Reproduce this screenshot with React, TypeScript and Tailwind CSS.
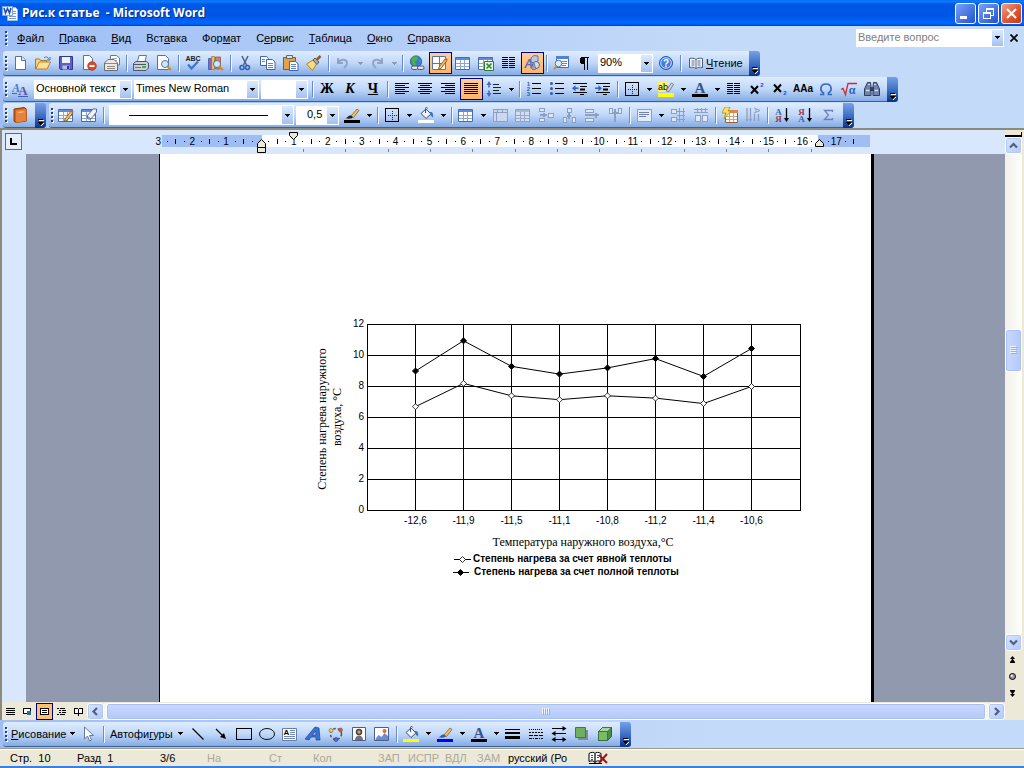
import React from 'react';

type Kids = { children?: React.ReactNode };

function Ic({ children, crisp }: Kids & { crisp?: boolean }) {
  return (
    <svg viewBox="0 0 16 16" aria-hidden="true" className="size-4 shrink-0" shapeRendering={crisp ? 'crispEdges' : undefined}>
      {children}
    </svg>
  );
}

function Tri({ faded }: { faded?: boolean }) {
  return (
    <svg viewBox="0 0 5 3" aria-hidden="true" className="h-[3px] w-[5px] shrink-0" shapeRendering="crispEdges">
      <path d="M0 0h5v1H4v1H3v1H2V2H1V1H0z" fill={faded ? '#8c98ae' : '#000'} />
    </svg>
  );
}

function Btn({ label, on, children }: Kids & { label: string; on?: boolean }) {
  return (
    <button
      type="button"
      aria-label={label}
      aria-pressed={on}
      className={
        on
          ? 'flex h-[22px] w-[23px] shrink-0 items-center justify-center border border-[#000080] bg-gradient-to-b from-[#ffcf90] to-[#ffb566] pr-px'
          : 'flex h-[22px] w-[23px] shrink-0 items-center justify-center pr-px'
      }
    >
      {children}
    </button>
  );
}

function Drop({ label, faded }: { label: string; faded?: boolean }) {
  return (
    <button type="button" aria-label={label} className="flex h-[22px] w-[11px] shrink-0 items-center justify-center">
      <Tri faded={faded} />
    </button>
  );
}

function Sep() {
  return (
    <div className="flex w-1.5 shrink-0 justify-center">
      <div className="h-4 w-px bg-[#6a8ccb]" />
      <div className="h-4 w-px translate-y-px bg-[#f1f9ff]" />
    </div>
  );
}

function Grip() {
  return (
    <svg viewBox="0 0 6 16" aria-hidden="true" className="h-4 w-1.5 shrink-0" shapeRendering="crispEdges">
      {[1, 5, 9, 13].map((y) => (
        <g key={y}>
          <rect x="3" y={y + 1} width="2" height="2" fill="#fff" />
          <rect x="2" y={y} width="2" height="2" fill="#27417a" />
        </g>
      ))}
    </svg>
  );
}

function Bar({ label, children }: Kids & { label: string }) {
  return (
    <div role="toolbar" aria-label={label} className="flex h-[25px] items-stretch">
      <div className="flex items-center rounded-l-[3px] border-b border-[#3b619c] bg-gradient-to-b from-[#dfecfe] via-[#c0d8f9] to-[#84abe3] pr-[3px]">
        <Grip />
        {children}
      </div>
      <button
        type="button"
        aria-label={label + ': параметры'}
        className="flex w-[11px] items-end justify-center rounded-r-[3px] bg-gradient-to-b from-[#77a1e6] via-[#3f70c4] to-[#063290] pb-0.5"
      >
        <svg viewBox="0 0 7 7" aria-hidden="true" className="size-[7px]" shapeRendering="crispEdges">
          <path d="M1 0h5v1H1zM1 3h5v1H5v1H4v1H3V5H2V4H1z" fill="#000" />
          <path d="M2 1h5v1H2zM6 4h1v1H6zM5 5h1v1H5zM4 6h1v1H4z" fill="#fff" />
        </svg>
      </button>
    </div>
  );
}

function Combo({ label, value, className }: { label: string; value: string; className: string }) {
  return (
    <div className={'relative mr-0.5 flex h-[19px] shrink-0 bg-white ' + className}>
      <select aria-label={label} defaultValue={value} className="w-full appearance-none bg-transparent pr-3 pb-0.5 pl-0.5 outline-none">
        <option value={value}>{value}</option>
      </select>
      <ComboArrow />
    </div>
  );
}

function ComboArrow() {
  return (
    <span className="pointer-events-none absolute inset-y-px right-px flex w-[11px] items-center justify-center bg-gradient-to-b from-[#dcebfe] to-[#a3c2f0]">
      <Tri />
    </span>
  );
}

/* ---------- shared glyph parts ---------- */

const Sheet = () => <path d="M3.500 1.500h6.500l3.500 3.500v9.500h-10z" fill="#fff" stroke="#5a6f9e" />;
const Lens = () => (
  <>
    <circle cx="9" cy="9" r="3.500" fill="#cfe8f8" stroke="#56749c" />
    <path d="M11.5 11.5l3.500 3.500" stroke="#d58a2c" strokeWidth="2.200" />
  </>
);
const Pencil = () => (
  <>
    <path d="M7 12l6-8 2 1.500-6 8-2.600 1z" fill="#f2c45e" stroke="#6e4a18" strokeWidth=".8" />
    <path d="M12.400 4.600l1.300-1.800 2 1.500-1.300 1.800z" fill="#d6614e" />
  </>
);
const Grid = ({ faded }: { faded?: boolean }) => (
  <>
    <path d="M.5 2.500h14v12H.5z" fill={faded ? '#d3dff2' : '#fff'} stroke={faded ? '#8fa0c2' : '#4a6aa5'} />
    <path d="M1 3h13v2H1z" fill={faded ? '#a9b8d6' : '#5f8bd8'} />
    <path d="M1 8.500h13M1 11.500h13M5.500 5v9M9.500 5v9" stroke={faded ? '#97a8c9' : '#8aa7d8'} />
  </>
);
const Borders = () => (
  <>
    <path d="M2 2h13v13H2z" fill="none" stroke="#000" strokeWidth="1" transform="translate(-.5 -.5)" />
    <path d="M4 8h9M8 4v9" stroke="#222" strokeDasharray="1 1" />
  </>
);
const Bucket = ({ color }: { color: string }) => (
  <>
    <path d="M3 6.500L8 2l5 5-5 4.500z" fill="#eef3fa" stroke="#41506e" />
    <path d="M7.500 6V1.500c0-1.300 2-1.300 2 0" fill="none" stroke="#41506e" />
    <path d="M12 5c3 0 3.500 2 3 5.500-1.500-1-2.500-2-3-3.500z" fill="#3b74c4" />
    <path d="M0 13h16v3H0z" fill={color} />
  </>
);
const Brush = ({ color, tone }: { color: string; tone: string }) => (
  <>
    <path d="M7 9l6-7 2 1.500-5.500 7z" fill="#f2c45e" stroke="#7a4d1a" strokeWidth=".7" />
    <path d="M1 11c3 0 3-3 6-2.500l2 2C7 12 4 12 1 11z" fill={tone} />
    <path d="M0 13h16v3H0z" fill={color} />
  </>
);
const LetterA = ({ color }: { color: string }) => (
  <>
    <text x="8" y="12" textAnchor="middle" fontFamily="Liberation Serif, serif" fontWeight="bold" fontSize="15" fill="#35548e">A</text>
    <path d="M0 13h16v3H0z" fill={color} />
  </>
);
const Columns = () => (
  <>
    {[2, 4, 6, 8, 10, 12].map((y) => (
      <path key={y} d={`M1 ${y}h6v1H1zM8 ${y}h6v1H8z`} fill="#000" />
    ))}
  </>
);

function Lines({ kind }: { kind: 'left' | 'center' | 'right' | 'full' }) {
  return (
    <Ic crisp>
      {[2, 4, 6, 8, 10, 12].map((y, i) => {
        const w = kind === 'full' || i % 2 === 0 ? 14 : 10;
        const x = kind === 'right' ? 15 - w : kind === 'center' ? 8 - w / 2 : 1;
        return <rect key={y} x={x} y={y} width={w} height="1" fill="#000" />;
      })}
    </Ic>
  );
}

/* ---------- bars ---------- */

function TitleBar() {
  return (
    <header className="flex h-[26px] shrink-0 items-center bg-[linear-gradient(180deg,#0a6ff0_0%,#0a7bff_6%,#0058e6_16%,#0055e5_60%,#0066ff_85%,#0062f5_93%,#003dc0_100%)] pr-0.5 pl-0.5">
      <svg viewBox="0 0 16 16" aria-hidden="true" className="size-4">
        <path d="M5.500 2.500h8l2 2v11h-10z" fill="#fff" stroke="#9db7dd" />
        <path d="M10 6.500h4M10 8.500h4M7 11.500h7M7 13.500h7" stroke="#7c98cc" />
        <path d="M.5 1.500h10v9H.5z" fill="#e9f1fc" stroke="#7fa4e0" />
        <path d="M2 3l1.500 5 2-4.500L7.500 8 9 3" fill="none" stroke="#2350a6" strokeWidth="1.500" />
      </svg>
      <h1 className="ml-1 flex-1 font-['Open_Sans',sans-serif] text-xs font-bold whitespace-pre text-white [text-shadow:1px_1px_1px_#0a2a80]">Рис.к статье  - Microsoft Word</h1>
      <div className="flex gap-0.5">
        <button type="button" aria-label="Свернуть" className="size-[21px] rounded-[3px] border border-white bg-gradient-to-br from-[#7ba1f5] to-[#1f4fd6]">
          <svg viewBox="0 0 19 19" aria-hidden="true"><path d="M4 12h7v3H4z" fill="#fff" /></svg>
        </button>
        <button type="button" aria-label="Восстановить" className="size-[21px] rounded-[3px] border border-white bg-gradient-to-br from-[#7ba1f5] to-[#1f4fd6]">
          <svg viewBox="0 0 19 19" aria-hidden="true" shapeRendering="crispEdges">
            <path d="M7 4h8v2H7zM7 6h1v2H7zM14 6h1v6h-1zM12 11h2v1h-2zM4 8h8v2H4zM4 10h1v5H4zM11 10h1v5h-1zM5 14h6v1H5z" fill="#fff" />
          </svg>
        </button>
        <button type="button" aria-label="Закрыть" className="size-[21px] rounded-[3px] border border-white bg-gradient-to-br from-[#f0a088] via-[#e25a35] to-[#c03a14]">
          <svg viewBox="0 0 19 19" aria-hidden="true"><path d="M5 5l9 9M14 5l-9 9" stroke="#fff" strokeWidth="2.200" /></svg>
        </button>
      </div>
    </header>
  );
}

const menus: [string, string, string][] = [
  ['', 'Ф', 'айл'],
  ['', 'П', 'равка'],
  ['', 'В', 'ид'],
  ['Вст', 'а', 'вка'],
  ['Фор', 'м', 'ат'],
  ['С', 'е', 'рвис'],
  ['', 'Т', 'аблица'],
  ['', 'О', 'кно'],
  ['', 'С', 'правка'],
];

function MenuBar() {
  return (
    <nav className="flex h-[25px] items-center pr-1 pb-0.5 pl-[3px]">
      <Grip />
      <div className="flex flex-1 gap-px pl-px">
        {menus.map(([a, b, c]) => (
          <button key={a + b + c} type="button" className="px-[7px]">
            {a}
            <u className="underline-offset-1">{b}</u>
            {c}
          </button>
        ))}
      </div>
      <div className="relative mr-1 flex h-[18px] w-[148px] bg-white">
        <input aria-label="Введите вопрос" placeholder="Введите вопрос" className="w-full bg-transparent pr-3 pb-0.5 pl-0.5 outline-none placeholder:text-[#808080]" />
        <ComboArrow />
      </div>
      <button type="button" aria-label="Закрыть документ" className="flex size-3 items-center justify-center">
        <svg viewBox="0 0 8 8" aria-hidden="true" className="size-2"><path d="M.5 .5l7 7M7.500 .5l-7 7" stroke="#000" strokeWidth="1.700" /></svg>
      </button>
    </nav>
  );
}

function StandardBar() {
  return (
    <Bar label="Стандартная">
      <Btn label="Создать"><Ic><Sheet /><path d="M9.500 1.500v4h4" fill="#d9e4f5" stroke="#5a6f9e" /></Ic></Btn>
      <Btn label="Открыть"><Ic><path d="M.5 14V4h4l1 1.500h6V7" fill="#f7d67c" stroke="#a87820" /><path d="M1 14l3-7h11.500L12 14z" fill="#fbe09a" stroke="#b8842a" /><path d="M9 3c2-2 4-1 4.500 1M15 2v3h-3" fill="none" stroke="#3c6cb5" /></Ic></Btn>
      <Btn label="Сохранить"><Ic><path d="M1.500 1.500h13v13h-12l-1-1z" fill="#5c5fc7" stroke="#34368c" /><path d="M4 2h8v6H4z" fill="#eef2fb" /><path d="M4.500 10.500h7v4h-7z" fill="#b7bce2" /><path d="M9 11h2v3H9z" fill="#34368c" /></Ic></Btn>
      <Btn label="Разрешения"><Ic><path d="M2.500 .5h6l3 3v11h-9z" fill="#fff" stroke="#5a6f9e" /><circle cx="11" cy="11" r="4.300" fill="#dd4a24" stroke="#b12d10" strokeWidth=".7" /><path d="M8.500 10h5v2h-5z" fill="#fff" /></Ic></Btn>
      <Btn label="Сообщение"><Ic><path d="M6.500 .5h6l3 2.500v7h-9z" fill="#fff" stroke="#6c7686" /><path d="M8 3.500h5M8 5.500h5" stroke="#b0b6c4" /><path d="M.5 8L4 4.500h6L13.500 8v7.500H.5z" fill="#eceadf" stroke="#6c6c70" /><path d="M1 8.500h12M3 11.500h8M3 13.500h8" fill="none" stroke="#8a8a8c" /></Ic></Btn>
      <Sep />
      <Btn label="Печать"><Ic><path d="M4.500 6.500l1.500-6h7.500l-1.500 6z" fill="#fff" stroke="#65738f" /><path d="M.5 8.500L3 6.500h10.500l2 1.500v5l-2.500 2.500H.5z" fill="#c9cedb" stroke="#4c566d" /><path d="M1 9.500h12" stroke="#4c566d" /><path d="M9 11h4v2H9z" fill="#2fc020" /><path d="M2 12.500h6" stroke="#6d768a" /></Ic></Btn>
      <Btn label="Предварительный просмотр"><Ic><path d="M1.500 .5h8l3 3v11h-11z" fill="#fff" stroke="#5a6f9e" /><Lens /></Ic></Btn>
      <Sep />
      <Btn label="Правописание"><Ic><text x="8" y="6" textAnchor="middle" fontFamily="Liberation Sans, sans-serif" fontWeight="bold" fontSize="7" fill="#222">ABC</text><path d="M3 9.500l3.500 4L13 6.500" fill="none" stroke="#3c77d2" strokeWidth="2.300" /></Ic></Btn>
      <Btn label="Справочные материалы"><Ic><path d="M.5 3.500h3v11h-3z" fill="#7a6cc0" stroke="#4d4390" strokeWidth=".7" /><path d="M3.500 1.500h3v13h-3z" fill="#e2c069" stroke="#93732a" strokeWidth=".7" /><path d="M7.500 2h5v12h-5z" fill="#d4826a" stroke="#8c4a35" strokeWidth=".7" /><Lens /></Ic></Btn>
      <Sep />
      <Btn label="Вырезать"><Ic><path d="M5 1l4.500 9M11 1L6.500 10" stroke="#4c5f85" strokeWidth="1.500" /><circle cx="5" cy="12.500" r="2" fill="none" stroke="#2a5db8" strokeWidth="1.500" /><circle cx="10.500" cy="12.500" r="2" fill="none" stroke="#2a5db8" strokeWidth="1.500" /></Ic></Btn>
      <Btn label="Копировать"><Ic><path d="M.5 1.500h6l2 2v7h-8z" fill="#fff" stroke="#3d63ae" /><path d="M6.500 4.500h6l2.500 2.500v7.500H6.500z" fill="#fff" stroke="#3d63ae" /><path d="M2 4.500h3M2 6.500h3M8 8.500h5M8 10.500h5M8 12.500h5" stroke="#5d83cc" /></Ic></Btn>
      <Btn label="Вставить"><Ic><path d="M.5 2.500h12v12H.5z" fill="#e0a24a" stroke="#8c5a18" /><path d="M3.500 .5h6v3h-6z" fill="#e0e0e0" stroke="#666" /><path d="M6.500 6.500h6l2.500 2v7H6.500z" fill="#fff" stroke="#3d63ae" /><path d="M8 9.500h5M8 11.500h5M8 13.500h5" stroke="#5d83cc" /></Ic></Btn>
      <Btn label="Формат по образцу"><Ic><path d="M.5 9L7 5l3.500 4-4 6.500z" fill="#f6dc7d" stroke="#a8842c" /><path d="M7 5l2-2 4 4-2 2.500z" fill="#a8a8b0" stroke="#5c5c68" /><path d="M11 4.500l3.500-3.500" stroke="#8a5a28" strokeWidth="2.500" /></Ic></Btn>
      <Sep />
      <Btn label="Отменить"><Ic><path d="M3 3v5h5M3.500 7.500C6 3.500 12 4 12 8c0 2-1 3.500-3 5" fill="none" stroke="#93a5c6" strokeWidth="2" /></Ic></Btn>
      <Drop label="Список отмены" faded />
      <Btn label="Вернуть"><Ic><path d="M13 3v5H8M12.500 7.500C10 3.500 4 4 4 8c0 2 1 3.500 3 5" fill="none" stroke="#93a5c6" strokeWidth="2" /></Ic></Btn>
      <Drop label="Список возврата" faded />
      <Sep />
      <Btn label="Гиперссылка"><Ic><circle cx="7" cy="6.500" r="5.700" fill="#3a7bd0" stroke="#24509a" strokeWidth=".7" /><path d="M3 3c2-2 5-2 6-1l-1 3-2 2 1 3-2 1C3 9 2 6 3 3z" fill="#4db04a" /><path d="M10 4l2 2-1 2z" fill="#4db04a" /><rect x="2.500" y="11" width="6.500" height="3.500" rx="1.700" fill="#dce4ee" stroke="#4b5870" /><rect x="8.500" y="11" width="6.500" height="3.500" rx="1.700" fill="#dce4ee" stroke="#4b5870" /></Ic></Btn>
      <Btn label="Таблицы и границы" on><Ic><path d="M.5 1.500h13v13H.5z" fill="#fff" stroke="#5d77a8" /><path d="M7.500 2v12M1 8.500h12" stroke="#5d77a8" /><Pencil /></Ic></Btn>
      <Btn label="Добавить таблицу"><Ic><Grid /></Ic></Btn>
      <Btn label="Таблица Excel"><Ic><Grid /><path d="M6.500 6.500h9v9h-9z" fill="#e8f6e4" stroke="#2d7a32" /><path d="M8.500 8.500l5 5M13.500 8.500l-5 5" stroke="#2d8a34" strokeWidth="1.700" /></Ic></Btn>
      <Btn label="Колонки"><Ic crisp><Columns /></Ic></Btn>
      <Btn label="Рисование" on><Ic><text x="4.500" y="13" textAnchor="middle" fontFamily="Liberation Sans, sans-serif" fontStyle="italic" fontWeight="bold" fontSize="12" fill="#5a6cc4">A</text><path d="M7 3l3-2.500 4 .5v5l-4 2-3-1z" fill="#b9c8e4" stroke="#4e6392" strokeWidth=".8" /><ellipse cx="12" cy="10" rx="3.500" ry="3.500" fill="#d4ddea" stroke="#586784" /><path d="M7 13l3-5 2 6-3 1z" fill="#93a4c6" stroke="#586784" strokeWidth=".7" /></Ic></Btn>
      <Sep />
      <Btn label="Схема документа"><Ic><path d="M3.500 1.500h12v11h-12z" fill="#fff" stroke="#4a6aa5" /><path d="M3 1h13v3H3z" fill="#4f82d6" /><path d="M9 6.500h5M9 8.500h5M9 10.500h4" stroke="#6d87b8" /><circle cx="5.500" cy="8.500" r="3.300" fill="#d6effa" stroke="#56749c" /><path d="M3.500 11L1 14.500" stroke="#d58a2c" strokeWidth="2" /></Ic></Btn>
      <Btn label="Непечатаемые знаки"><Ic crisp><path d="M6 2h7v1h-1v12h-1V3h-2v12H8V9H6C3 9 3 2 6 2z" fill="#000" /></Ic></Btn>
      <Combo label="Масштаб" value="90%" className="ml-0.5 w-[55px]" />
      <Btn label="Справка"><Ic><circle cx="8" cy="8" r="6.500" fill="#3f7fe0" stroke="#2456b0" /><circle cx="8" cy="8" r="5.300" fill="none" stroke="#cfe0fa" /><text x="8" y="11.500" textAnchor="middle" fontFamily="Liberation Sans, sans-serif" fontWeight="bold" fontSize="10" fill="#fff">?</text></Ic></Btn>
      <Sep />
      <button type="button" className="flex h-[22px] items-center gap-0.5 pr-[3px] pl-1">
        <Ic><path d="M8 4.500C6 3 4 3 1.500 3.500v9C4 12 6 12 8 13.500c2-1.500 4-1.500 6.500-1v-9C12 3 10 3 8 4.500z" fill="#f4f7fd" stroke="#4a5a7c" /><path d="M8 4.500v9M3.500 6h3M3.500 8h3M3.500 10h3M9.500 6h3M9.500 8h3M9.500 10h3" stroke="#5d6c8c" /></Ic>
        <span><u className="underline-offset-1">Ч</u>тение</span>
      </button>
    </Bar>
  );
}

function Glyph({ t, cls }: { t: string; cls: string }) {
  return <span className={"font-['Liberation_Serif',serif] text-sm leading-4 font-bold " + cls}>{t}</span>;
}

function FormatBar() {
  return (
    <Bar label="Форматирование">
      <Btn label="Стили"><Ic><text x="4" y="11" textAnchor="middle" fontFamily="Liberation Serif, serif" fontStyle="italic" fontWeight="bold" fontSize="12" fill="#3c78d0">A</text><text x="11" y="14" textAnchor="middle" fontFamily="Liberation Serif, serif" fontWeight="bold" fontSize="13" fill="#6a50a8">A</text><path d="M0 12.500h5M6 15.500h10" stroke="#3c64b0" /></Ic></Btn>
      <Combo label="Стиль" value="Основной текст" className="ml-0.5 w-[98px]" />
      <Combo label="Шрифт" value="Times New Roman" className="w-[125px]" />
      <Combo label="Размер" value=" " className="w-[47px]" />
      <Sep />
      <Btn label="Полужирный"><Glyph t="Ж" cls="" /></Btn>
      <Btn label="Курсив"><Glyph t="К" cls="italic" /></Btn>
      <Btn label="Подчёркнутый"><Glyph t="Ч" cls="underline decoration-1 underline-offset-1" /></Btn>
      <Sep />
      <Btn label="По левому краю"><Lines kind="left" /></Btn>
      <Btn label="По центру"><Lines kind="center" /></Btn>
      <Btn label="По правому краю"><Lines kind="right" /></Btn>
      <Btn label="По ширине" on><Lines kind="full" /></Btn>
      <Btn label="Междустрочный интервал"><Ic><path d="M3 0L.5 4h5zM3 16l-2.500-4h5z" fill="#3c6cc0" /><path d="M3 4v2.500M3 9.500V12" stroke="#3c6cc0" strokeWidth="1.500" /><path d="M7 3.500h6M7 6.500h8M7 9.500h6M7 12.500h8" stroke="#222" /></Ic></Btn>
      <Drop label="Выбор интервала" />
      <Sep />
      <Btn label="Нумерация"><Ic>{[5, 10, 15].map((y, i) => (<g key={y}><text x="2.500" y={y} textAnchor="middle" fontFamily="Liberation Sans, sans-serif" fontWeight="bold" fontSize="6" fill="#2c5cb4">{i + 1}</text><rect x="6" y={y - 3} width="9" height="1" fill="#000" /></g>))}</Ic></Btn>
      <Btn label="Маркеры"><Ic>{[2, 7, 12].map((y) => (<g key={y}><circle cx="2.500" cy={y + 0.5} r="1.500" fill="#2c5cb4" /><rect x="6" y={y} width="9" height="1" fill="#000" /></g>))}</Ic></Btn>
      <Btn label="Уменьшить отступ"><Ic><path d="M1 2.500h14M8 5.500h7M1 11.500h14M8 13.500h4" stroke="#000" /><path d="M8 8.500h5" stroke="#000" strokeWidth="2" /><path d="M6.500 7.200H3" stroke="#2c62c0" strokeWidth="1.500" /><path d="M0 7.200l3.500-3v6z" fill="#2c62c0" /></Ic></Btn>
      <Btn label="Увеличить отступ"><Ic><path d="M1 2.500h14M8 5.500h7M1 11.500h14M8 13.500h4" stroke="#000" /><path d="M8 8.500h5" stroke="#000" strokeWidth="2" /><path d="M0 7.200h4" stroke="#2c62c0" strokeWidth="1.500" /><path d="M7 7.200l-3.500-3v6z" fill="#2c62c0" /></Ic></Btn>
      <Sep />
      <Btn label="Внешние границы"><Ic crisp><Borders /></Ic></Btn>
      <Drop label="Выбор границ" />
      <Btn label="Выделение цветом"><Ic><path d="M0 1h10v10H0z" fill="#fdf26a" /><text x="5" y="9" textAnchor="middle" fontFamily="Liberation Sans, sans-serif" fontSize="9" fill="#000">ab</text><path d="M8 10l5.500-8 2 1.500L11 10.500z" fill="#cdd6e4" stroke="#5c6880" strokeWidth=".8" /><path d="M0 12h16v4H0z" fill="#ff0" /></Ic></Btn>
      <Drop label="Цвет выделения" />
      <Btn label="Цвет шрифта"><Ic><LetterA color="#000" /></Ic></Btn>
      <Drop label="Выбор цвета шрифта" />
      <Btn label="Колонки текста"><Ic crisp><Columns /></Ic></Btn>
      <Btn label="Надстрочный"><Ic><path d="M2 5l7 7.500M9 5l-7 7.500" stroke="#000" strokeWidth="2" /><text x="13" y="6" textAnchor="middle" fontFamily="Liberation Sans, sans-serif" fontWeight="bold" fontSize="6" fill="#2450b0">2</text></Ic></Btn>
      <Btn label="Подстрочный"><Ic><path d="M2 3.500L9 11M9 3.500L2 11" stroke="#000" strokeWidth="2" /><text x="13" y="14" textAnchor="middle" fontFamily="Liberation Sans, sans-serif" fontWeight="bold" fontSize="6" fill="#2450b0">2</text></Ic></Btn>
      <Btn label="Регистр"><span className="font-['Liberation_Sans_Narrow','Liberation_Sans',sans-serif] text-[10px] font-bold">AAa</span></Btn>
      <Btn label="Символ"><Ic><path d="M2 13.500h3.500v-1.500C1.500 9.500 2 3 8 3s6.500 6.500 2.500 9v1.500H14" fill="none" stroke="#3468c8" strokeWidth="1.700" /></Ic></Btn>
      <Btn label="Формула"><Ic><path d="M0 8.500l2-1 2.500 6L7 2.500h9" fill="none" stroke="#d02c2c" strokeWidth="1.300" /><text x="11" y="13" textAnchor="middle" fontFamily="Liberation Serif, serif" fontWeight="bold" fontSize="12" fill="#2c62c8">α</text></Ic></Btn>
      <Btn label="Найти"><Ic><path d="M3.500 1.500h3l.5 4v9H.5V8zM9.500 1.500h3l3 6.500v6.500H9V6z" fill="#6f83ab" stroke="#303e5c" /><path d="M6 6h4v4H6z" fill="#303e5c" /><path d="M2 9.500h3.500M10.500 9.500H14" stroke="#d2dcef" strokeWidth="1.500" /><path d="M4 3.500h2M10 3.500h2" stroke="#d2dcef" /></Ic></Btn>
    </Bar>
  );
}

const GREY = '#8f9fbf';

function TablesBar() {
  return (
    <Bar label="Таблицы и границы">
      <Btn label="Нарисовать таблицу"><Ic><Grid /><Pencil /></Ic></Btn>
      <Btn label="Ластик"><Ic><Grid /><path d="M6 9l6-7h3.500v3L10 12H7z" fill="#eef1f7" stroke="#5b6b8c" /><path d="M6 9l4 3" stroke="#5b6b8c" /></Ic></Btn>
      <Sep />
      <button type="button" aria-haspopup="listbox" aria-label="Тип линии" className="relative mr-0.5 ml-0.5 flex h-5 w-[185px] items-center bg-white pr-[18px] pl-5">
        <span className="mr-2 h-px flex-1 bg-black" />
        <ComboArrow />
      </button>
      <Combo label="Толщина линии" value="0,5" className="w-[43px] [&>select]:pl-[11px]" />
      <Btn label="Цвет границ"><Ic><Brush color="#000" tone="#222" /></Ic></Btn>
      <Drop label="Выбор цвета границ" />
      <Sep />
      <Btn label="Границы"><Ic crisp><Borders /></Ic></Btn>
      <Drop label="Вид границ" />
      <Btn label="Цвет заливки"><Ic><Bucket color="#fff" /></Ic></Btn>
      <Drop label="Выбор заливки" />
      <Sep />
      <Btn label="Вставить таблицу"><Ic><Grid /></Ic></Btn>
      <Drop label="Вставка элементов" />
      <Btn label="Объединить ячейки"><Ic crisp><path d="M1 2h14v12H1z" fill="#cbd8ef" stroke={GREY} /><path d="M1 5h14M5 2v3M10 2v3M4 5v9" stroke={GREY} /></Ic></Btn>
      <Btn label="Разбить ячейки"><Ic><Grid faded /></Ic></Btn>
      <Btn label="Вставить строку"><Ic crisp><path d="M1 1h5v3H1zM1 11h5v3H1zM10 6h5v4h-5z" fill="#dfe8f7" stroke={GREY} /><path d="M2 8h7M6 6v4" stroke={GREY} strokeWidth="2" /></Ic></Btn>
      <Btn label="Вставить столбец"><Ic crisp><path d="M2 10h3v5H2zM11 10h3v5h-3zM6 1h4v4H6z" fill="#dfe8f7" stroke={GREY} /><path d="M8 5v7M6 9h4" stroke={GREY} strokeWidth="2" /></Ic></Btn>
      <Btn label="Удалить строку"><Ic crisp><path d="M1 2h8v3H1zM1 11h8v3H1z" fill="#dfe8f7" stroke={GREY} /><path d="M1 8h14M12 6v5" stroke={GREY} strokeWidth="2" /></Ic></Btn>
      <Btn label="Удалить столбец"><Ic crisp><path d="M2 1h3v5H2zM11 1h3v5h-3z" fill="#dfe8f7" stroke={GREY} /><path d="M5 6h6M8 2v13" stroke={GREY} strokeWidth="2" /></Ic></Btn>
      <Sep />
      <Btn label="Выравнивание"><Ic crisp><path d="M1 2h14v12H1z" fill="#e3ebf8" stroke={GREY} /><path d="M3 5h10M3 7h10M3 9h7" stroke="#6f83ad" /></Ic></Btn>
      <Drop label="Вид выравнивания" />
      <Btn label="Высота строк"><Ic crisp><path d="M1 2h5v4H1zM1 10h5v4H1zM9 1v14M13 1v14M7 4h8M7 8h8M7 12h8" fill="#dfe8f7" stroke={GREY} /></Ic></Btn>
      <Btn label="Ширина столбцов"><Ic crisp><path d="M2 8h5v6H2zM9 8h5v6H9zM1 2h14M1 5h14M4 1v5M8 1v5M12 1v5" fill="#dfe8f7" stroke={GREY} /></Ic></Btn>
      <Sep />
      <Btn label="Автоформат"><Ic><path d="M3.500 3.500h12v12h-12z" fill="#fff" stroke="#a0622c" /><path d="M3 3h13v3H3z" fill="#e08848" /><path d="M4 9.500h11M4 12.500h11M7.500 6v9M11.500 6v9" stroke="#d3a27a" /><path d="M3 0h5L6 4h3L2 12l2-6H0z" fill="#fbe45c" stroke="#b08a1c" strokeWidth=".8" /></Ic></Btn>
      <Btn label="Направление текста"><Ic><path d="M2 1v13M5.500 1v13M9.500 7v7M13.500 7v7" stroke={GREY} strokeWidth="1.300" /><path d="M.5 12l1.500 3 1.500-3zM4 12l1.500 3 1.500-3z" fill={GREY} /><path d="M9 1l6 2.500L9 6M11 2v3" fill="none" stroke={GREY} /></Ic></Btn>
      <Sep />
      {[['А', 'Я', '#3c62a8', '#a03c44'], ['Я', 'А', '#a03c44', '#3c62a8']].map(([a, b, c, d]) => (
        <Btn key={a} label={a === 'А' ? 'По возрастанию' : 'По убыванию'}>
          <Ic>
            <text x="4.500" y="7.500" textAnchor="middle" fontFamily="Liberation Serif, serif" fontWeight="bold" fontSize="9" fill={c}>{a}</text>
            <text x="4.500" y="15" textAnchor="middle" fontFamily="Liberation Serif, serif" fontWeight="bold" fontSize="9" fill={d}>{b}</text>
            <path d="M12.500 1v11" stroke="#000" strokeWidth="1.300" /><path d="M10 11h5l-2.500 4z" fill="#000" />
          </Ic>
        </Btn>
      ))}
      <Btn label="Автосумма"><Ic><path d="M12.500 5V3.500h-8L8.500 8l-4 4.500h8V11" fill="none" stroke="#6c82b4" strokeWidth="1.300" /></Ic></Btn>
    </Bar>
  );
}

/* ---------- workspace ---------- */

const CM = 33.9;
const ZERO = 102;

function Ruler() {
  const marks = Array.from({ length: 83 }, (_, i) => i - 12).filter((q) => q !== 0 && q <= 71);
  return (
    <svg viewBox="0 0 714 23" className="h-[23px] w-[714px] shrink-0 overflow-visible" aria-hidden="true">
      <rect x="3" y="5" width="708" height="12" fill="#9ebef5" />
      <rect x="103" y="5" width="556" height="12" fill="#fff" />
      {marks.map((q) => {
        const x = ZERO + (q * CM) / 4 - 1;
        if (q % 4 === 0) {
          return (
            <text key={q} x={x} y="15" textAnchor="middle" fontSize="10" fontFamily="Liberation Sans, sans-serif">
              {Math.abs(q / 4)}
            </text>
          );
        }
        const half = q % 2 === 0;
        return <rect key={q} x={Math.round(x)} y={half ? 9 : 11} width="1" height={half ? 5 : 1} />;
      })}
      {Array.from({ length: 13 }, (_, i) => (
        <rect key={i} x={Math.round(144 + i * 42.3)} y="19" width="1" height="3" fill="#808080" />
      ))}
      <path d="M130.500 2.500h8v3l-4 4-4-4z" fill="#ece9d8" stroke="#000" />
      <path d="M98.500 22.500v-9l4-4 4 4v9zM98.500 17.500h8" fill="#ece9d8" stroke="#000" />
      <path d="M656.500 16.500v-3l4-4 4 4v3z" fill="#ece9d8" stroke="#000" />
    </svg>
  );
}

const xLabels = ['-12,6', '-11,9', '-11,5', '-11,1', '-10,8', '-11,2', '-11,4', '-10,6'];
const sensible = [6.7, 8.2, 7.4, 7.15, 7.4, 7.25, 6.9, 8];
const total = [9, 10.95, 9.3, 8.8, 9.2, 9.8, 8.65, 10.45];
const px = (i: number) => 415.5 + i * 48;
const py = (v: number) => 510.5 - v * 15.5;

function Series({ values, fill }: { values: number[]; fill: string }) {
  return (
    <g>
      <polyline points={values.map((v, i) => px(i) + ',' + py(v)).join(' ')} fill="none" stroke="#000" />
      {values.map((v, i) => (
        <path key={i} d={`M${px(i) - 3} ${py(v)}l3-3 3 3-3 3z`} fill={fill} stroke="#000" strokeWidth={fill === '#fff' ? 0.8 : 1} />
      ))}
    </g>
  );
}

function Chart() {
  const sans = 'Liberation Sans, sans-serif';
  const serif = 'Liberation Serif, serif';
  return (
    <svg viewBox="310 315 500 270" className="mt-[161px] ml-[150px] h-[270px] w-[500px]" role="img" aria-label="Степень нагрева наружного воздуха">
      <g stroke="#000" shapeRendering="crispEdges">
        {[0, 2, 4, 6, 8, 10, 12].map((v) => <path key={v} d={`M367 ${Math.floor(py(v)) + 0.5}h434`} />)}
        {[0, 1, 2, 3, 4, 5, 6, 7, 8, 9].map((i) => <path key={i} d={`M${i === 9 ? 800.5 : 367.5 + i * 48} 324v187`} />)}
      </g>
      <Series values={sensible} fill="#fff" />
      <Series values={total} fill="#000" />
      <g fontFamily={sans} fontSize="10">
        {[0, 2, 4, 6, 8, 10, 12].map((v) => <text key={v} x="364" y={Math.round(py(v) + 2.6)} textAnchor="end">{v}</text>)}
        {xLabels.map((t, i) => <text key={t} x={px(i)} y="524" textAnchor="middle">{t}</text>)}
        <text x="473" y="562" fontWeight="bold">Степень нагрева за счет явной теплоты</text>
        <text x="474" y="575" fontWeight="bold">Степень нагрева за счет полной теплоты</text>
      </g>
      <g fontFamily={serif} fontSize="12">
        <text x="583" y="546" textAnchor="middle">Температура наружного воздуха,°С</text>
        <text transform="translate(326 419) rotate(-90)" textAnchor="middle">Степень нагрева наружного</text>
        <text transform="translate(341 417) rotate(-90)" textAnchor="middle">воздуха, °С</text>
      </g>
      <path d="M454 559.500h17M453 572.500h16" stroke="#000" />
      <path d="M459.500 559.500l3-3 3 3-3 3z" fill="#fff" stroke="#000" strokeWidth=".8" />
      <path d="M457.500 572.500l3-3 3 3-3 3z" fill="#000" stroke="#000" />
    </svg>
  );
}

function ScrollBtn({ label, d, cls }: { label: string; d: string; cls?: string }) {
  return (
    <button
      type="button"
      aria-label={label}
      className={'flex h-[17px] w-[17px] shrink-0 items-center justify-center rounded-[3px] border border-white bg-gradient-to-br from-[#dbe5fe] to-[#b0c8fb] shadow-[inset_0_0_0_1px_#b4c8f6] ' + (cls ?? '')}
    >
      <svg viewBox="0 0 9 9" aria-hidden="true" className="size-[9px]">
        <path d={d} fill="none" stroke="#4d6185" strokeWidth="2.200" />
      </svg>
    </button>
  );
}

function NavBtn({ label, children }: Kids & { label: string }) {
  return (
    <button type="button" aria-label={label} className="flex h-[17px] w-full shrink-0 items-center justify-center pr-0.5">
      <svg viewBox="0 0 7 7" aria-hidden="true" className="size-[7px]">{children}</svg>
    </button>
  );
}

function Workspace() {
  return (
    <div className="flex min-h-0 flex-1 border-t-2 border-l-2 border-[#8d8a7c]">
      <main className="flex min-w-0 flex-1 flex-col">
        <div className="flex h-6 shrink-0 bg-[#d8e7fc]">
          <div className="w-6 shrink-0 pt-[3px] pl-[3px]">
            <button type="button" aria-label="Тип табуляции" className="flex size-[17px] items-center justify-center border border-[#4a6ab0] bg-[#e4eefc]">
              <svg viewBox="0 0 7 7" aria-hidden="true" className="size-[7px]"><path d="M0 0h2v5h5v2H0z" /></svg>
            </button>
          </div>
          <div className="flex min-w-0 flex-1 justify-center"><Ruler /></div>
        </div>
        <div className="flex min-h-0 flex-1">
          <div className="w-6 shrink-0 bg-[#d8e7fc]" />
          <div className="flex min-w-0 flex-1 justify-center overflow-hidden bg-[#9199ae] pl-0.5">
            <article className="w-[715px] shrink-0 border-r-[3px] border-l border-black bg-white">
              <Chart />
            </article>
          </div>
        </div>
      </main>
      <aside className="flex w-[19px] shrink-0 flex-col bg-[#ece9d8] pr-0.5">
        <div className="mt-0.5 h-[5px] shrink-0 border-r border-b-2 border-black bg-[#ece9d8]" />
        <ScrollBtn label="Вверх" d="M1 6.500l3.500-3.500L8 6.500" />
        <div className="flex min-h-0 flex-1 flex-col bg-gradient-to-r from-[#f1f0e8] to-[#fefefb]">
          <div className="grow-[2]" />
          <div className="flex h-[43px] w-[17px] shrink-0 items-center justify-center rounded-[3px] border border-white bg-gradient-to-r from-[#cad8fd] to-[#b3c9fb] shadow-[inset_0_0_0_1px_#a9c0f5]">
            <svg viewBox="0 0 7 8" aria-hidden="true" className="h-2 w-[7px]" shapeRendering="crispEdges">
              <path d="M0 0h6v1H0zM0 2h6v1H0zM0 4h6v1H0zM0 6h6v1H0z" fill="#eef4fe" />
              <path d="M1 1h6v1H1zM1 3h6v1H1zM1 5h6v1H1zM1 7h6v1H1z" fill="#8cb0f8" />
            </svg>
          </div>
          <div className="grow-[3]" />
        </div>
        <ScrollBtn label="Вниз" d="M1 2.500L4.500 6 8 2.500" />
        <NavBtn label="Предыдущая страница"><path d="M3.500 0L6 3H1zM3.500 2.500L6 6H1zM1 6h5v1H1z" /></NavBtn>
        <NavBtn label="Объект перехода"><circle cx="3.500" cy="3.500" r="3" fill="#999" stroke="#000" /><circle cx="2.700" cy="2.700" r="1" fill="#fff" /></NavBtn>
        <NavBtn label="Следующая страница"><path d="M3.500 7L6 4H1zM3.500 4.500L6 1H1zM1 0h5v1H1z" /></NavBtn>
      </aside>
    </div>
  );
}

function ViewBtn({ label, on, children }: Kids & { label: string; on?: boolean }) {
  return (
    <button
      type="button"
      aria-label={label}
      aria-pressed={on}
      className={on ? 'flex h-[17px] w-[17px] items-center justify-center border border-[#000080] bg-[#ffbf71]' : 'flex h-[17px] w-[17px] items-center justify-center'}
    >
      <svg viewBox="0 0 9 9" aria-hidden="true" className="size-[9px] shrink-0" shapeRendering="crispEdges">{children}</svg>
    </button>
  );
}

function BottomScroll() {
  return (
    <div className="flex h-[18px] shrink-0 items-center border-l-2 border-[#8d8a7c] bg-[#ece9d8]">
      <ViewBtn label="Обычный режим"><path d="M0 1h9v1H0zM0 3h9v1H0zM0 5h9v1H0zM0 7h9v1H0z" /></ViewBtn>
      <ViewBtn label="Веб-документ"><path d="M.5 1.500h7v5h-7z" fill="#fff" stroke="#000" /><path d="M4 4h4v4H4z" fill="#2f6a9a" /></ViewBtn>
      <ViewBtn label="Разметка страницы" on><path d="M.5 1.500h8v6h-8z" fill="#fff" stroke="#000" /><path d="M2 3h5v1H2zM2 5h5v1H2z" /></ViewBtn>
      <ViewBtn label="Структура"><path d="M0 1h2v1H0zM3 1h5v1H3zM2 3h2v1H2zM5 3h4v1H5zM2 5h2v1H2zM5 5h4v1H5zM0 7h2v1H0zM3 7h5v1H3z" /></ViewBtn>
      <ViewBtn label="Режим чтения"><path d="M.5 1.500h3l1 1 1-1h3v5h-3l-1 1-1-1h-3zM4.500 2v7" fill="#fff" stroke="#000" /></ViewBtn>
      <ScrollBtn label="Влево" d="M6 1L2.500 4.500 6 8" />
      <div className="flex min-w-0 flex-1 bg-[#f5f4ee] px-0.5">
        <div className="flex h-[17px] flex-1 items-center justify-center rounded-[3px] border border-white bg-gradient-to-b from-[#cad8fd] to-[#b3c9fb] shadow-[inset_0_0_0_1px_#a9c0f5]">
          <svg viewBox="0 0 8 7" aria-hidden="true" className="h-[7px] w-2" shapeRendering="crispEdges">
            <path d="M0 0h1v6H0zM2 0h1v6H2zM4 0h1v6H4zM6 0h1v6H6z" fill="#eef4fe" />
            <path d="M1 1h1v6H1zM3 1h1v6H3zM5 1h1v6H5zM7 1h1v6H7z" fill="#8cb0f8" />
          </svg>
        </div>
      </div>
      <ScrollBtn label="Вправо" d="M3 1l3.500 3.500L3 8" cls="mr-[19px]" />
    </div>
  );
}

function DrawingBar() {
  return (
    <div className="flex h-[29px] shrink-0 items-center border-b border-[#9c9a8c] bg-gradient-to-r from-[#9ebef5] to-[#c4daf9] to-70% pl-[3px]">
      <Bar label="Рисование">
        <button type="button" className="flex h-[22px] w-[69px] items-center justify-between pr-[3px] pl-0.5"><span><u className="underline-offset-1">Р</u>исование</span><Tri /></button>
        <Btn label="Выбор объектов"><Ic><path d="M3.500 1v12l3-3 2 5 2-1-2-4.500h4z" fill="#fff" stroke="#66789c" /></Ic></Btn>
        <Sep />
        <button type="button" className="flex h-[22px] w-20 items-center justify-between pr-1 pl-[3px]"><span>Автофи<u className="underline-offset-1">г</u>уры</span><Tri /></button>
        <Btn label="Линия"><Ic><path d="M2.500 2.500l11 11" stroke="#000" strokeWidth="1.300" /></Ic></Btn>
        <Btn label="Стрелка"><Ic><path d="M3 3l7 7" stroke="#000" strokeWidth="1.300" /><path d="M13 13L7 11l4-4z" /></Ic></Btn>
        <Btn label="Прямоугольник"><Ic crisp><path d="M.5 2.500h15v11H.5z" fill="none" stroke="#000" /></Ic></Btn>
        <Btn label="Овал"><Ic><ellipse cx="8" cy="8" rx="7.500" ry="5.500" fill="none" stroke="#111" /></Ic></Btn>
        <Btn label="Надпись"><Ic><path d="M.5 2.500h14v12H.5z" fill="#fff" stroke="#6b7da4" /><text x="4.500" y="9" textAnchor="middle" fontFamily="Liberation Sans, sans-serif" fontWeight="bold" fontSize="8">A</text><path d="M8 4.500h5M8 6.500h5M8 8.500h5M2 10.500h11M2 12.500h11" stroke="#7186b4" /></Ic></Btn>
        <Btn label="WordArt"><Ic><path d="M0 13L10 1l4 1 1 12h-4v-3H6l-2 3zM7.500 9H11l-.5-4z" fill="#3a72d4" stroke="#1d459a" strokeWidth=".7" fillRule="evenodd" /></Ic></Btn>
        <Btn label="Диаграмма"><Ic><circle cx="8" cy="8" r="5.500" fill="none" stroke="#555" strokeWidth="1.500" strokeDasharray="2.500 2" /><circle cx="3" cy="4.500" r="2" fill="#f1ce40" stroke="#665" strokeWidth=".6" /><circle cx="12.500" cy="4" r="2" fill="#e2513a" stroke="#665" strokeWidth=".6" /><circle cx="8" cy="13.500" r="2" fill="#4d6fe0" stroke="#335" strokeWidth=".6" /></Ic></Btn>
        <Btn label="Картинка"><Ic><path d="M1.500 1.500h13v13h-13z" fill="#fff" stroke="#4d5f88" /><path d="M4 14c0-6 8-6 8 0z" fill="#6c7480" /><circle cx="8" cy="6" r="2.500" fill="#d59a66" stroke="#444" strokeWidth="1.500" /></Ic></Btn>
        <Btn label="Рисунок"><Ic><path d="M.5 1.500h14v13H.5z" fill="#fff" stroke="#4d5f88" /><path d="M1.500 13l3-4 3 2 3-4 3.500 3v4h-12.500z" fill="#6b8cd0" /><circle cx="10.500" cy="5" r="2" fill="#e26a38" /></Ic></Btn>
        <Sep />
        <Btn label="Заливка"><Ic><Bucket color="#ff0" /></Ic></Btn>
        <Drop label="Выбор цвета заливки" />
        <Btn label="Цвет линий"><Ic><Brush color="#00f" tone="#2f5cb8" /></Ic></Btn>
        <Drop label="Выбор цвета линий" />
        <Btn label="Цвет текста"><Ic><LetterA color="#000" /></Ic></Btn>
        <Drop label="Выбор цвета текста" />
        <Btn label="Толщина"><Ic crisp><path d="M0 3h15v1H0zM0 6h15v2H0zM0 10h15v3H0z" /></Ic></Btn>
        <Btn label="Штрих"><Ic crisp><path d="M1 3.500h14" stroke="#000" strokeDasharray="1 1" /><path d="M1 6.500h14" stroke="#000" strokeDasharray="2 1" /><path d="M1 9.500h14" stroke="#000" strokeDasharray="4 1" /><path d="M1 12.500h14" stroke="#000" strokeDasharray="3 1 1 1" /></Ic></Btn>
        <Btn label="Вид стрелки"><Ic><path d="M1 2.500h12M3 7.500h12M3 13.500h10" stroke="#000" /><path d="M15.500 2.500l-4-2.500v5zM.5 7.500l4-2.500v5zM.5 13.500l4-2.500v5zM15.500 13.500l-4-2.500v5z" /></Ic></Btn>
        <Btn label="Тень"><Ic><path d="M4 4h10v10H4z" fill="#7c8c9c" /><path d="M1.500 1.500h10v10h-10z" fill="#6fb060" stroke="#3f7c36" /></Ic></Btn>
        <Btn label="Объём"><Ic><path d="M1.500 5.500l4-4h9v9l-4 4h-9z" fill="#4b8f42" stroke="#2e6628" /><path d="M1.500 5.500l4-4h9l-4 4z" fill="#a5d59a" stroke="#2e6628" strokeWidth=".7" /><path d="M1.500 5.500h9v9h-9z" fill="#79bb6c" stroke="#2e6628" strokeWidth=".7" /></Ic></Btn>
      </Bar>
    </div>
  );
}

function StatusBar() {
  return (
    <footer className="flex h-[19px] shrink-0 items-center border-t border-b-2 border-t-white border-b-[#3a80e0] bg-[#ece9d8] pl-2.5 whitespace-pre">
      <span className="w-[67px]">Стр.  10</span>
      <span className="w-[83px]">Разд  1</span>
      <span className="w-[47px]">3/6</span>
      <span className="flex text-[#aca899]">
        <span className="w-[62px]">На</span>
        <span className="w-11">Ст</span>
        <span className="w-[65px]">Кол</span>
        <span className="w-[30px]">ЗАП</span>
        <span className="w-[37px]">ИСПР</span>
        <span className="w-8">ВДЛ</span>
        <span className="w-[31px]">ЗАМ</span>
      </span>
      <span className="w-20">русский (Ро</span>
      <svg viewBox="0 0 20 14" aria-hidden="true" className="h-3.5 w-5">
        <path d="M1 2.500c2-1.500 5-1.500 6 0 1-1.500 4-1.500 6 0v8c-2-1-5-1-6 1-1-2-4-2-6-1z" fill="#fff" stroke="#000" />
        <path d="M7 3v9M1 12.500h13" stroke="#000" strokeWidth="1.200" />
        <path d="M3 4.500h2M3 6.500h2M3 8.500h2M9 4.500h2M9 6.500h2" stroke="#555" />
        <path d="M11 4l8 8M19 3l-8 9" stroke="#a01414" strokeWidth="2" />
      </svg>
    </footer>
  );
}

export default function App() {
  return (
    <div className="flex h-screen flex-col overflow-hidden bg-[#ece9d8] font-['Liberation_Sans',sans-serif] text-[11px] leading-[14px] text-black">
      <TitleBar />
      <div className="shrink-0 bg-gradient-to-r from-[#9ebef5] to-[#c4daf9] to-70%">
        <MenuBar />
        <div className="flex flex-col gap-px pl-[3px]">
          <StandardBar />
          <FormatBar />
          <div className="flex gap-[3px]">
            <Bar label="Сборник">
              <Btn label="Книга"><Ic><path d="M2 2l10-1.500 2.500 1.500v12L4 15.500 2 14z" fill="#d2601c" stroke="#8c3a0c" /><path d="M4 3.500L14.500 2v12L4 15.500z" fill="#e8823a" /><path d="M6.500 5.500l5-.7" stroke="#fbd9a0" /></Ic></Btn>
            </Bar>
            <TablesBar />
          </div>
        </div>
      </div>
      <Workspace />
      <BottomScroll />
      <DrawingBar />
      <StatusBar />
    </div>
  );
}
